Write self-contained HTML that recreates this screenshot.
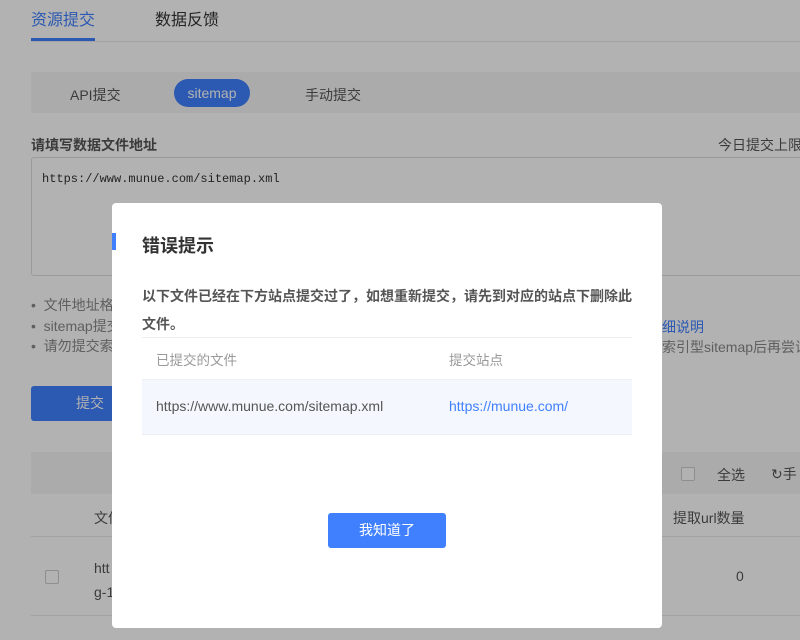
<!DOCTYPE html>
<html style="width:800px;height:640px;overflow:hidden"><head><meta charset="utf-8"><style>
*{margin:0;padding:0;box-sizing:border-box}
body{width:800px;height:640px;overflow:hidden;background:#fff;font-family:"Liberation Sans","Noto Sans CJK SC",sans-serif;color:#333;font-size:14px;position:relative}
.a{position:absolute;white-space:nowrap}
.ov{position:absolute;left:0;top:0;width:800px;height:640px;background:rgba(0,0,0,0.3)}
.cb{position:absolute;width:14px;height:14px;border:1px solid #ccc;border-radius:2px;background:#fff}
</style></head><body>
<div class="a" style="left:31px;top:6px;font-size:16px;color:#4080ff">资源提交</div>
<div class="a" style="left:155px;top:6px;font-size:16px;color:#333">数据反馈</div>
<div class="a" style="left:31px;top:38px;width:64px;height:3px;background:#4080ff"></div>
<div class="a" style="left:31px;top:41px;width:769px;height:1px;background:#e8e8e8"></div>
<div class="a" style="left:31px;top:72px;width:769px;height:41px;background:#f5f5f5"></div>
<div class="a" style="left:70px;top:85px;color:#555">API提交</div>
<div class="a" style="left:174px;top:79px;width:76px;height:28px;border-radius:14px;background:#4080ff;color:#fff;text-align:center;line-height:28px">sitemap</div>
<div class="a" style="left:305px;top:85px;color:#555">手动提交</div>
<div class="a" style="left:31px;top:135px;font-weight:bold;color:#555">请填写数据文件地址</div>
<div class="a" style="left:718px;top:135px;color:#555">今日提交上限</div>
<div class="a" style="left:31px;top:157px;width:780px;height:119px;border:1px solid #ddd;background:#fff;border-radius:3px"></div>
<div class="a" style="left:42px;top:172px;font-family:'Liberation Mono',monospace;font-size:12px;color:#333">https://www.munue.com/sitemap.xml</div>
<div class="a" style="left:31px;top:295px;color:#888;font-size:14px;line-height:20.5px">•&nbsp; 文件地址格<br>•&nbsp; sitemap提交<br>•&nbsp; 请勿提交索</div>
<div class="a" style="left:662px;top:317px;color:#4080ff;font-size:14px">细说明</div>
<div class="a" style="left:662px;top:337px;color:#888;font-size:14px">索引型sitemap后再尝试</div>
<div class="a" style="left:31px;top:386px;width:120px;height:35px;background:#4080ff;border-radius:3px;color:#fff;line-height:35px;padding-left:45px">提交</div>
<div class="a" style="left:31px;top:452px;width:769px;height:42px;background:#f5f5f5"></div>
<div class="cb" style="left:681px;top:467px"></div>
<div class="a" style="left:717px;top:465px;color:#555">全选</div>
<div class="a" style="left:771px;top:464px;color:#555">↻手</div>
<div class="a" style="left:31px;top:536px;width:769px;height:1px;background:#e8e8e8"></div>
<div class="a" style="left:94px;top:508px;color:#555">文件</div>
<div class="a" style="left:673px;top:508px;color:#555">提取url数量</div>
<div class="cb" style="left:45px;top:570px"></div>
<div class="a" style="left:94px;top:556px;color:#555;line-height:24px">htt<br>g-1</div>
<div class="a" style="left:736px;top:568px;color:#555">0</div>
<div class="a" style="left:31px;top:615px;width:769px;height:1px;background:#e8e8e8"></div>
<div class="ov"></div>
<div class="a" style="left:112px;top:203px;width:550px;height:425px;background:#fff;border-radius:4px"></div>
<div class="a" style="left:112px;top:233px;width:4px;height:17px;background:#4080ff"></div>
<div class="a" style="left:142px;top:232px;font-size:18px;font-weight:bold;color:#333">错误提示</div>
<div class="a" style="left:142px;top:282px;width:492px;white-space:normal;font-weight:bold;color:#555;font-size:14px;line-height:28px">以下文件已经在下方站点提交过了，如想重新提交，请先到对应的站点下删除此<br>文件。</div>
<div class="a" style="left:142px;top:337px;width:490px;height:1px;background:#eee"></div>
<div class="a" style="left:156px;top:349px;color:#999;font-size:13.5px">已提交的文件</div>
<div class="a" style="left:449px;top:349px;color:#999;font-size:13.5px">提交站点</div>
<div class="a" style="left:142px;top:379px;width:490px;height:56px;background:#f4f7fd;border-top:1px solid #eef0f4;border-bottom:1px solid #eef0f4"></div>
<div class="a" style="left:156px;top:398px;color:#555;font-size:14px">https://www.munue.com/sitemap.xml</div>
<div class="a" style="left:449px;top:398px;color:#4080ff;font-size:14px">https://munue.com/</div>
<div class="a" style="left:328px;top:513px;width:118px;height:35px;background:#4080ff;border-radius:3px;color:#fff;text-align:center;line-height:35px">我知道了</div>
</body></html>
